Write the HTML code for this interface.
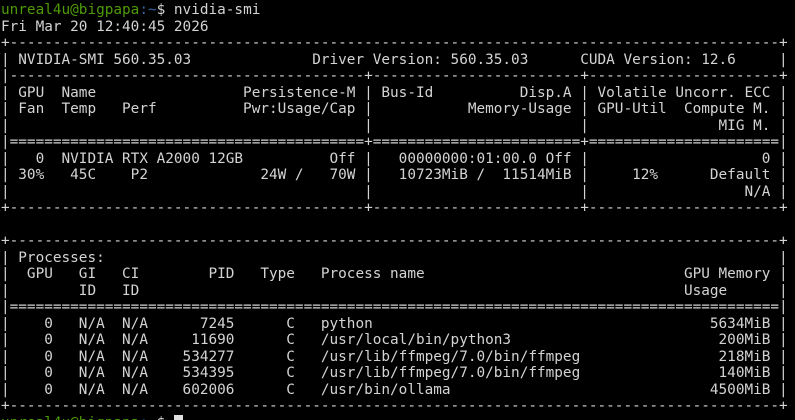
<!DOCTYPE html>
<html><head><meta charset="utf-8"><style>
html,body{margin:0;padding:0;background:#000;width:795px;height:420px;overflow:hidden}
pre{margin:0;padding:0 0 0 1px;position:relative;top:2px;font-family:"DejaVu Sans Mono","Liberation Mono",monospace;font-size:14.37px;line-height:16.5px;color:#d3d3d3;white-space:pre}
.g{color:#4e9a06}.b{color:#3465a4}
.cur{background:#e0e0e0;color:#000}
</style></head><body><pre><span class="g">unreal4u@bigpapa</span><span class="b">:~</span>$ nvidia-smi
Fri Mar 20 12:40:45 2026       
+-----------------------------------------------------------------------------------------+
| NVIDIA-SMI 560.35.03              Driver Version: 560.35.03      CUDA Version: 12.6     |
|-----------------------------------------+------------------------+----------------------+
| GPU  Name                 Persistence-M | Bus-Id          Disp.A | Volatile Uncorr. ECC |
| Fan  Temp   Perf          Pwr:Usage/Cap |           Memory-Usage | GPU-Util  Compute M. |
|                                         |                        |               MIG M. |
|=========================================+========================+======================|
|   0  NVIDIA RTX A2000 12GB          Off |   00000000:01:00.0 Off |                    0 |
| 30%   45C    P2             24W /   70W |   10723MiB /  11514MiB |     12%      Default |
|                                         |                        |                  N/A |
+-----------------------------------------+------------------------+----------------------+
                                                                                         
+-----------------------------------------------------------------------------------------+
| Processes:                                                                              |
|  GPU   GI   CI        PID   Type   Process name                              GPU Memory |
|        ID   ID                                                               Usage      |
|=========================================================================================|
|    0   N/A  N/A      7245      C   python                                       5634MiB |
|    0   N/A  N/A     11690      C   /usr/local/bin/python3                        200MiB |
|    0   N/A  N/A    534277      C   /usr/lib/ffmpeg/7.0/bin/ffmpeg                218MiB |
|    0   N/A  N/A    534395      C   /usr/lib/ffmpeg/7.0/bin/ffmpeg                140MiB |
|    0   N/A  N/A    602006      C   /usr/bin/ollama                              4500MiB |
+-----------------------------------------------------------------------------------------+
<span class="g">unreal4u@bigpapa</span><span class="b">:~</span>$ <span class="cur"> </span></pre></body></html>
